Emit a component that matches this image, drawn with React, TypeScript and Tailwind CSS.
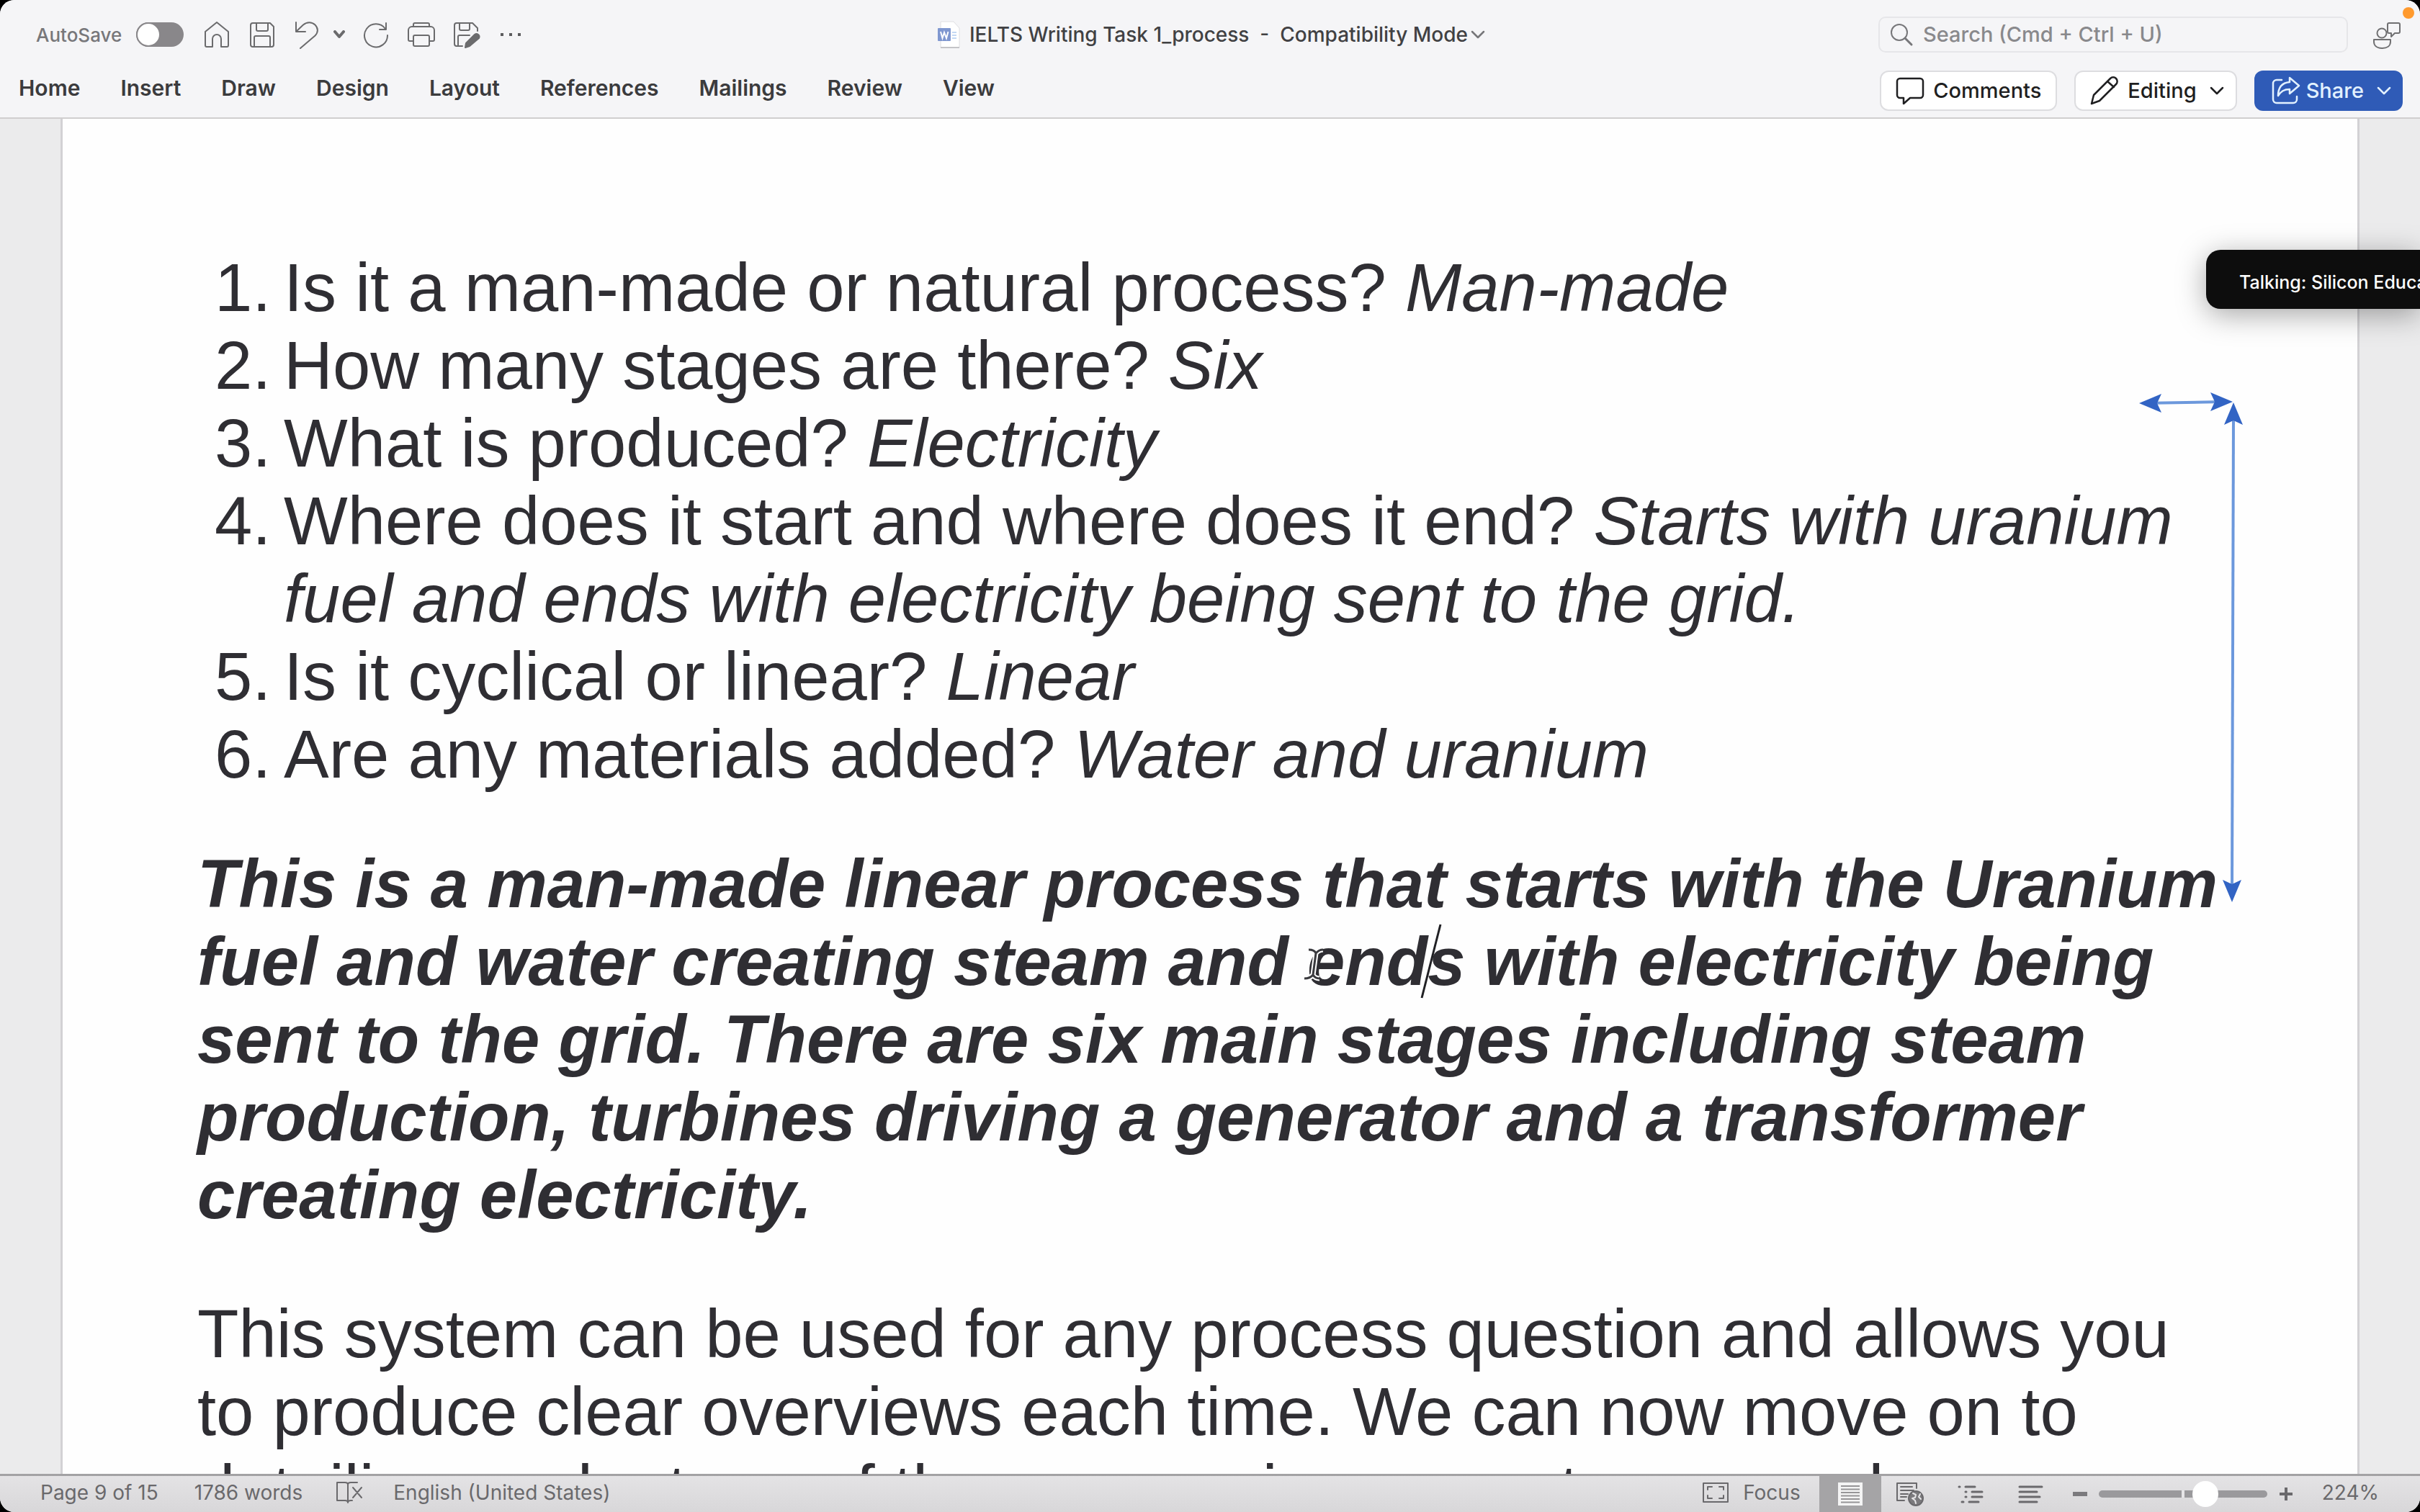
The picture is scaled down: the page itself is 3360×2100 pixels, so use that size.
import type { ReactNode } from "react";

const tabs = ["Home", "Insert", "Draw", "Design", "Layout", "References", "Mailings", "Review", "View"];

const questions = [
  { question: "Is it a man-made or natural process?", answer: "Man-made" },
  { question: "How many stages are there?", answer: "Six" },
  { question: "What is produced?", answer: "Electricity" },
  {
    question: "Where does it start and where does it end?",
    answer: "Starts with uranium fuel and ends with electricity being sent to the grid.",
  },
  { question: "Is it cyclical or linear?", answer: "Linear" },
  { question: "Are any materials added?", answer: "Water and uranium" },
];

function Icon({ children, className = "size-10", box = "0 0 40 40" }: { children: ReactNode; className?: string; box?: string }) {
  return (
    <svg
      viewBox={box}
      className={className}
      fill="none"
      stroke="currentColor"
      strokeWidth={2}
      strokeLinecap="round"
      strokeLinejoin="round"
      aria-hidden="true"
    >
      {children}
    </svg>
  );
}

function Chevron({ className = "h-3 w-5" }: { className?: string }) {
  return (
    <Icon className={className} box="0 0 20 12">
      <path d="M2 2l8 8 8-8" strokeWidth={2.5} />
    </Icon>
  );
}

function TitleBar() {
  return (
    <div className="grid h-24 grid-cols-[1fr_auto_1fr] items-center">
      <div className="flex items-center pl-[50px] text-[#6b6b6d]">
        <label htmlFor="autosave" className="text-[26px] font-medium text-[#77777a]">
          AutoSave
        </label>
        <span className="relative ml-5 h-[34px] w-[66px]">
          <input
            id="autosave"
            type="checkbox"
            role="switch"
            className="h-[34px] w-[66px] appearance-none rounded-full bg-[#89878a] align-top"
          />
          <span className="pointer-events-none absolute top-0 left-0 size-[34px] rounded-full border-2 border-[#89878a] bg-white" />
        </span>
        <div className="ml-[26px] flex items-center gap-[23px]">
          <button aria-label="Home">
            <Icon>
              <path d="M4 16L20 3l16 13v19a2 2 0 0 1-2 2h-8V26a6 6 0 0 0-12 0v11H6a2 2 0 0 1-2-2z" />
            </Icon>
          </button>
          <button aria-label="Save">
            <Icon>
              <path d="M7 4h24l5 5v25a3 3 0 0 1-3 3H7a3 3 0 0 1-3-3V7a3 3 0 0 1 3-3zM12 4v9a2 2 0 0 0 2 2h12a2 2 0 0 0 2-2V4M9 37V24a2 2 0 0 1 2-2h18a2 2 0 0 1 2 2v13" />
            </Icon>
          </button>
          <div className="flex items-center gap-4">
            <button aria-label="Undo">
              <Icon>
                <path d="M4 3v13h13M4 16L14 6.500C19 2 26 2 30.500 6.500S35 17 30.500 21.500L10 39" />
              </Icon>
            </button>
            <button aria-label="Undo history">
              <Icon className="h-3 w-4" box="0 0 16 12">
                <path d="M2 2l6 7 6-7" strokeWidth={4} />
              </Icon>
            </button>
          </div>
          <button aria-label="Redo">
            <Icon>
              <path d="M33 12A16 16 0 1 0 36 21M34 4v9h-9" />
            </Icon>
          </button>
          <button aria-label="Print">
            <Icon>
              <path d="M8 29H4a2 2 0 0 1-2-2V14a5 5 0 0 1 5-5h26a5 5 0 0 1 5 5v13a2 2 0 0 1-2 2h-4M9 9V6a2 2 0 0 1 2-2h18a2 2 0 0 1 2 2v3M11 21h18a2 2 0 0 1 2 2v11a2 2 0 0 1-2 2H11a2 2 0 0 1-2-2V23a2 2 0 0 1 2-2z" />
            </Icon>
          </button>
          <button aria-label="Save as">
            <Icon>
              <path d="M14 36H6a3 3 0 0 1-3-3V7a3 3 0 0 1 3-3h22l7 7v4M10 4v8a2 2 0 0 0 2 2h10a2 2 0 0 0 2-2V4M8 36V23a2 2 0 0 1 2-2h14" />
              <path d="M31 20a4 4 0 0 1 6 5L24 36l-6 2 1-6z" fill="currentColor" />
            </Icon>
          </button>
          <button aria-label="More commands" className="flex gap-2 pl-1">
            <span className="size-1 bg-[#5c5c5e]" />
            <span className="size-1 bg-[#5c5c5e]" />
            <span className="size-1 bg-[#5c5c5e]" />
          </button>
        </div>
      </div>

      <button className="flex items-center pl-1 text-[28px] font-medium text-[#414143]">
        <svg viewBox="0 0 32 40" className="mr-3 h-10 w-8" aria-hidden="true">
          <path d="M4 2h18l8 9v27H4z" fill="#fff" stroke="#dedee2" />
          <path d="M4 38h26" stroke="#c4c4c8" strokeWidth="2" />
          <path d="M20 17h6M20 21h6M20 25h6" stroke="#c3d8f4" strokeWidth="2" />
          <rect y="11" width="18" height="18" rx="1" fill="#7f97d0" />
          <path d="M4 16l2.500 9L9 17l3 8 2.500-9" fill="none" stroke="#fff" strokeWidth="2" />
        </svg>
        <span className="whitespace-pre">IELTS Writing Task 1_process&nbsp; -&nbsp; Compatibility Mode</span>
        <Chevron className="ml-1 h-3 w-5 text-[#77777a]" />
      </button>

      <div className="flex items-center justify-end pr-6">
        <label className="flex h-[50px] w-[652px] items-center rounded-[10px] border-2 border-[#e6e6e9] px-3 text-[#77777a]">
          <Icon className="size-9 shrink-0" box="0 0 36 36">
            <circle cx="15" cy="15" r="11" />
            <path d="M23 23l9 9" strokeWidth={3} />
          </Icon>
          <input
            aria-label="Search"
            placeholder="Search (Cmd + Ctrl + U)"
            className="ml-3 w-full bg-transparent text-[29px] font-medium outline-none placeholder:text-[#89898c]"
          />
        </label>
        <button aria-label="Account" className="relative ml-8 text-[#707072]">
          <Icon className="size-11" box="0 0 44 44">
            <circle cx="15" cy="20" r="6.500" />
            <path d="M4 29h23v3c0 6-5 9-11.500 9S4 38 4 32zM25 6h13a2 2 0 0 1 2 2v10a2 2 0 0 1-2 2h-5l-5 5v-5h-3a2 2 0 0 1-2-2V8a2 2 0 0 1 2-2z" />
          </Icon>
          <span className="absolute -top-4 -right-4 size-4 rounded-full bg-[#ff9a2e]" />
        </button>
      </div>
    </div>
  );
}

function RibbonTabs() {
  return (
    <div className="flex h-[67px] items-start justify-between pr-6 pl-[26px]">
      <nav className="flex gap-14 pt-1.5 text-[30px] leading-10 font-semibold text-[#3b3b3d]">
        {tabs.map((tab) => (
          <button key={tab}>{tab}</button>
        ))}
      </nav>
      <div className="flex gap-6 pt-0.5 text-[29px] font-medium text-[#1f1f21]">
        <button className="flex h-14 items-center gap-3 rounded-xl border-2 border-[#dddde0] bg-white px-5">
          <Icon>
            <path d="M6 3h28a4 4 0 0 1 4 4v19a4 4 0 0 1-4 4H20l-9 8v-8H6a4 4 0 0 1-4-4V7a4 4 0 0 1 4-4z" strokeWidth={2.5} />
          </Icon>
          Comments
        </button>
        <button className="flex h-14 items-center rounded-xl border-2 border-[#dddde0] bg-white pr-4 pl-5">
          <Icon>
            <path d="M2 38l3-12L28 3a5 5 0 0 1 8 8L13 34zM24 7l9 8" strokeWidth={2.5} />
          </Icon>
          <span className="mr-[18px] ml-3">Editing</span>
          <Chevron />
        </button>
        <button className="flex h-14 items-center rounded-xl bg-[#2f5bb7] pr-4 pl-6 text-[#e2f1ff]">
          <Icon>
            <path d="M14 5H7a5 5 0 0 0-5 5v22a5 5 0 0 0 5 5h23a5 5 0 0 0 5-5v-4" strokeWidth={2.5} />
            <path d="M25 2l13 11-13 11v-6c-8 0-12 3-16 9 0-11 5-18 16-19z" strokeWidth={2.5} />
          </Icon>
          <span className="mr-[18px] ml-2">Share</span>
          <Chevron />
        </button>
      </div>
    </div>
  );
}

/* Double-headed connectors drawn beside the text */
function Connectors() {
  return (
    <svg viewBox="0 0 160 720" className="absolute top-[380px] right-[157px] h-[720px] w-40" aria-hidden="true">
      <g stroke="#6c98dc" strokeWidth="4">
        <path d="M20 15L130 13" />
        <path d="M145 36L143 690" />
      </g>
      <g fill="#3264c4">
        <path d="M14 15l31-13-6 13 6 13z" />
        <path d="M144 13l-31-13 6 13-6 13z" />
        <path d="M145 14l-13 31 13-6 13 6z" />
        <path d="M143 708l-13-31 13 6 13-6z" />
      </g>
    </svg>
  );
}

function Document() {
  return (
    <main className="flex min-h-0 flex-1 overflow-hidden bg-[#ebebec] px-[84px]">
      <article
        className="relative flex-1 border-x-3 border-[#d2d1d4] bg-[#fefefe] pt-[181px] pr-[193px] pl-[187px] text-[94px] leading-[108px] text-[#2f2e33]"
        style={{ fontFamily: '"Liberation Sans", Arial, sans-serif' }}
      >
        <ol>
          {questions.map(({ question, answer }, index) => (
            <li key={question} className="flex pl-6">
              <span className="w-24 shrink-0">{index + 1}.</span>
              <p>
                {question} <em>{answer}</em>
              </p>
            </li>
          ))}
        </ol>
        <p className="mt-[72px] font-bold italic">
          This is a man-made linear process that starts with the Uranium fuel and water creating steam and{" "}
          <span className="relative">
            ends
            <svg viewBox="0 0 36 48" className="absolute top-8 -left-2 h-12 w-9" fill="none" aria-hidden="true">
              <path d="M10 4q8 0 10 5 4-5 10-5M20 9L16 39M4 44q8 0 12-5 3 5 9 5" stroke="#fff" strokeWidth="7" />
              <path d="M10 4q8 0 10 5 4-5 10-5M20 9L16 39M4 44q8 0 12-5 3 5 9 5" stroke="#3a3a3e" strokeWidth="3" />
            </svg>
            <svg viewBox="0 0 32 104" className="absolute top-0 left-[156px] h-26 w-8" aria-hidden="true">
              <path d="M29 1L3 103" stroke="#202024" strokeWidth="3" />
            </svg>
          </span>{" "}
          with electricity being sent to the grid. There are six main stages including steam production, turbines driving a
          generator and a transformer creating electricity.
        </p>
        <p className="mt-[85px]">
          This system can be used for any process question and allows you to produce clear overviews each time. We can now
          move on to detailing each stage of the process in our next paragraphs.
        </p>
        <Connectors />
      </article>
    </main>
  );
}

function StatusBar() {
  return (
    <footer className="flex h-[53px] shrink-0 items-stretch justify-between border-t-3 border-[#a3a2a4] bg-linear-to-b from-[#e4e3e5] to-[#d8d7d9] text-[28px] text-[#6a696c]">
      <div className="flex items-center pb-1 pl-[56px]">
        <button>Page 9 of 15</button>
        <button className="ml-[50px]">1786 words</button>
        <button aria-label="Proofing" className="ml-[46px]">
          <Icon className="h-8 w-10" box="0 0 40 32">
            <path d="M17 4v26M2 2h11q4 0 4 3 0-3 4-3h9M2 2v25h11q4 0 4 3 0-3 4-3h2M24 9l12 14M36 9L24 23" />
          </Icon>
        </button>
        <button className="ml-10">English (United States)</button>
      </div>
      <div className="flex items-stretch pr-[57px]">
        <button className="flex items-center gap-5 pr-[26px] pb-1">
          <Icon className="h-7 w-9" box="0 0 36 28">
            <path d="M1 1h34v26H1zM7 10V6h6M23 6h6v4M29 18v4h-6M13 22H7v-4" />
          </Icon>
          Focus
        </button>
        <button aria-label="Print layout" className="flex w-[86px] items-center justify-center bg-[#a5a4a6]">
          <svg viewBox="0 0 36 32" className="h-8 w-9" aria-hidden="true">
            <path d="M1 0h34v32H1z" fill="#f4f4f4" />
            <path d="M5 5h26M5 9.500h26M5 14h26M5 18.500h26M5 23h26M5 27.500h26" stroke="#969597" strokeWidth="2" />
          </svg>
        </button>
        <button aria-label="Web layout" className="ml-5 flex items-center">
          <Icon className="h-9 w-10" box="0 0 40 36">
            <path d="M12 27H2V3h27v7M7 8h16M7 13h18M7 18h10M7 22h8" />
            <circle cx="28" cy="24" r="10" fill="#7b7a7d" />
            <path d="M24 17l4 2-1 4-4 1 4 3 1 4M34 18l-2 4 3 3" stroke="#e6e5e7" />
          </Icon>
        </button>
        <button aria-label="Outline" className="ml-[46px] flex items-center">
          <Icon className="h-7 w-9" box="0 0 36 28">
            <path d="M2 4h1M11 4h13M11 11h1M20 11h14M11 18h1M20 18h14M6 25h2M16 25h13" strokeWidth={3} />
          </Icon>
        </button>
        <button aria-label="Draft" className="ml-12 flex items-center">
          <Icon className="h-7 w-9" box="0 0 36 28">
            <path d="M2 4h31M2 11h24M2 18h28M2 25h24" strokeWidth={3} />
          </Icon>
        </button>
        <button aria-label="Zoom out" className="ml-10 flex items-center">
          <span className="h-1.5 w-5 bg-[#7b7a7d]" />
        </button>
        <input
          type="range"
          aria-label="Zoom"
          min={0}
          max={100}
          defaultValue={66}
          className="mx-4 h-9 w-[234px] appearance-none self-center bg-transparent [&::-webkit-slider-runnable-track]:h-2.5 [&::-webkit-slider-runnable-track]:rounded-full [&::-webkit-slider-runnable-track]:bg-[linear-gradient(90deg,#9a999c_49%,#e6e5e7_49%,#e6e5e7_51%,#9a999c_51%)] [&::-webkit-slider-thumb]:-mt-[13px] [&::-webkit-slider-thumb]:size-9 [&::-webkit-slider-thumb]:appearance-none [&::-webkit-slider-thumb]:rounded-full [&::-webkit-slider-thumb]:bg-white"
        />
        <button aria-label="Zoom in" className="flex items-center">
          <Icon className="size-5" box="0 0 20 20">
            <path d="M1 10h18M10 1v18" strokeWidth={4} strokeLinecap="butt" />
          </Icon>
        </button>
        <button className="ml-10 pb-1">224%</button>
      </div>
    </footer>
  );
}

export default function App() {
  return (
    <div className="h-screen bg-black" style={{ fontFamily: "Inter, sans-serif" }}>
      <div className="relative flex h-full flex-col overflow-hidden rounded-[20px] bg-white">
        <header className="shrink-0 border-b-2 border-[#d0cecf] bg-[#f5f5f7]">
          <TitleBar />
          <RibbonTabs />
        </header>
        <Document />
        <StatusBar />
        <aside className="absolute top-[347px] right-0 flex h-[82px] w-[297px] items-center rounded-l-[20px] bg-[#0d0d0d] pt-2.5 pl-[46px] text-[25px] font-medium whitespace-nowrap text-white shadow-[0_8px_40px_rgba(0,0,0,0.35)]">
          Talking: Silicon Education
        </aside>
      </div>
    </div>
  );
}
